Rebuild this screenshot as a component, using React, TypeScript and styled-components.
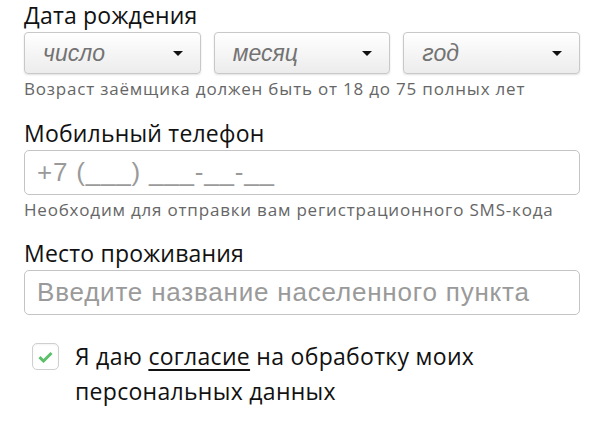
import { ReactElement, useState } from 'react'
import styled, { createGlobalStyle } from 'styled-components'

const GlobalStyle = createGlobalStyle`
  html, body {
    margin: 0;
    padding: 0;
    background: #fff;
  }
  body {
    font-family: 'Open Sans', 'DejaVu Sans', sans-serif;
    color: #111;
  }
`

const S = {
  Form: styled.form`
    width: 556px;
    padding: 2px 0 0 24px;
    display: flex;
    flex-direction: column;
  `,
  Field: styled.div<{ $gap?: number }>`
    display: flex;
    flex-direction: column;
    margin-bottom: ${({ $gap }) => $gap ?? 0}px;
  `,
  Label: styled.label`
    font-size: 23px;
    line-height: 26px;
    height: 26px;
    margin-bottom: 4px;
    color: #111;
    letter-spacing: 0.2px;
    white-space: nowrap;
  `,
  SelectRow: styled.div`
    display: grid;
    grid-template-columns: repeat(3, 1fr);
    gap: 13px;
  `,
  Select: styled.button`
    height: 42px;
    box-sizing: border-box;
    display: flex;
    align-items: center;
    justify-content: space-between;
    padding: 0 17px 0 18px;
    border: 1px solid #c8c8c8;
    border-radius: 4px;
    background: linear-gradient(#ffffff, #ececec);
    box-shadow: 0 1px 2px rgba(0, 0, 0, 0.12);
    font-family: 'Liberation Sans', Arial, sans-serif;
    font-style: italic;
    font-size: 23px;
    color: #737373;
    cursor: pointer;
  `,
  Caret: styled.span`
    width: 0;
    height: 0;
    border-left: 5px solid transparent;
    border-right: 5px solid transparent;
    border-top: 5px solid #111;
  `,
  Input: styled.input`
    height: 45px;
    box-sizing: border-box;
    width: 100%;
    border: 1px solid #c4c4c4;
    border-radius: 5px;
    padding: 0 12px;
    font-family: 'Liberation Sans', Arial, sans-serif;
    font-size: 26px;
    letter-spacing: 0.8px;
    color: #333;
    outline: none;

    &::placeholder {
      color: #9a9a9a;
    }
  `,
  Hint: styled.div`
    font-size: 17px;
    line-height: 20px;
    margin-top: 5px;
    color: #666;
    letter-spacing: 0.8px;
    white-space: nowrap;
  `,
  Consent: styled.label`
    display: flex;
    align-items: flex-start;
    gap: 16px;
    padding-left: 8px;
    margin-top: 28px;
    cursor: pointer;
  `,
  Checkbox: styled.span`
    flex: none;
    width: 27px;
    height: 27px;
    box-sizing: border-box;
    border: 1px solid #cfcfcf;
    border-radius: 5px;
    display: flex;
    align-items: center;
    justify-content: center;
    background: #fff;
    box-shadow: inset 0 1px 2px rgba(0, 0, 0, 0.05);
  `,
  ConsentText: styled.span`
    font-size: 23px;
    line-height: 35px;
    letter-spacing: 0.3px;
    margin-top: -4px;
    color: #111;
    width: 440px;
  `,
  Link: styled.a`
    color: #111;
    text-decoration: underline;
    text-underline-offset: 4px;
    text-decoration-thickness: 2px;
  `,
}

const SelectBox = ({ placeholder }: { placeholder: string }): ReactElement => (
  <S.Select type="button">
    <span>{placeholder}</span>
    <S.Caret />
  </S.Select>
)

export default function App(): ReactElement {
  const [agreed, setAgreed] = useState(true)

  return (
    <>
      <GlobalStyle />
      <S.Form onSubmit={(e) => e.preventDefault()}>
        <S.Field $gap={21}>
          <S.Label>Дата рождения</S.Label>
          <S.SelectRow>
            <SelectBox placeholder="число" />
            <SelectBox placeholder="месяц" />
            <SelectBox placeholder="год" />
          </S.SelectRow>
          <S.Hint>Возраст заёмщика должен быть от 18 до 75 полных лет</S.Hint>
        </S.Field>
        <S.Field $gap={20}>
          <S.Label htmlFor="phone">Мобильный телефон</S.Label>
          <S.Input id="phone" placeholder="+7 (___) ___-__-__" />
          <S.Hint>Необходим для отправки вам регистрационного SMS-кода</S.Hint>
        </S.Field>
        <S.Field>
          <S.Label htmlFor="city">Место проживания</S.Label>
          <S.Input id="city" placeholder="Введите название населенного пункта" />
        </S.Field>
        <S.Consent onClick={() => setAgreed(!agreed)}>
          <S.Checkbox>
            {agreed && (
              <svg width="15" height="12" viewBox="0 0 15 12">
                <path
                  d="M1.5 6.2 L5.5 10 L13.5 2"
                  fill="none"
                  stroke="#5cbf6a"
                  strokeWidth="3"
                />
              </svg>
            )}
          </S.Checkbox>
          <S.ConsentText>
            Я даю <S.Link href="#">согласие</S.Link> на обработку моих
            персональных данных
          </S.ConsentText>
        </S.Consent>
      </S.Form>
    </>
  )
}
